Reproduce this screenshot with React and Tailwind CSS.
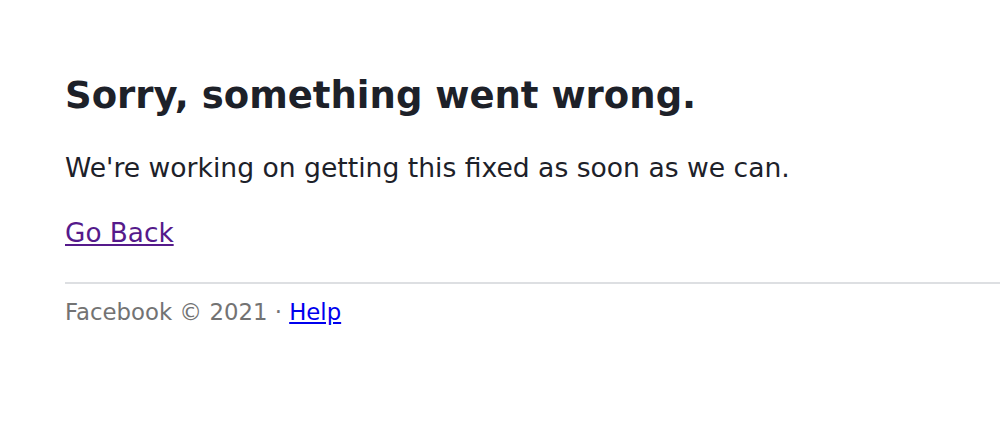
export default function App() {
  return (
    <div className="w-[1000px] h-[434px] bg-white overflow-hidden" style={{ fontFamily: '"DejaVu Sans", Verdana, sans-serif' }}>
      <div className="pt-[74px] pl-[65px]">
        <h1 className="text-[37px] leading-[44px] font-bold text-[#1d2129]">Sorry, something went wrong.</h1>
        <p className="mt-[34px] text-[26.6px] leading-[32px] text-[#1d2129]">We're working on getting this fixed as soon as we can.</p>
        <p className="mt-[33px] text-[26.3px] leading-[32px]">
          <a href="#" className="text-[#551a8b] underline">Go Back</a>
        </p>
      </div>
      <div className="ml-[65px] mt-[33px] border-t-2 border-[#dddfe2]"></div>
      <div className="pl-[65px] pt-[14px] text-[22.8px] leading-[28px] text-[#737373]">
        Facebook © 2021 · <a href="#" className="text-[#0000ee] underline">Help</a>
      </div>
    </div>
  );
}
